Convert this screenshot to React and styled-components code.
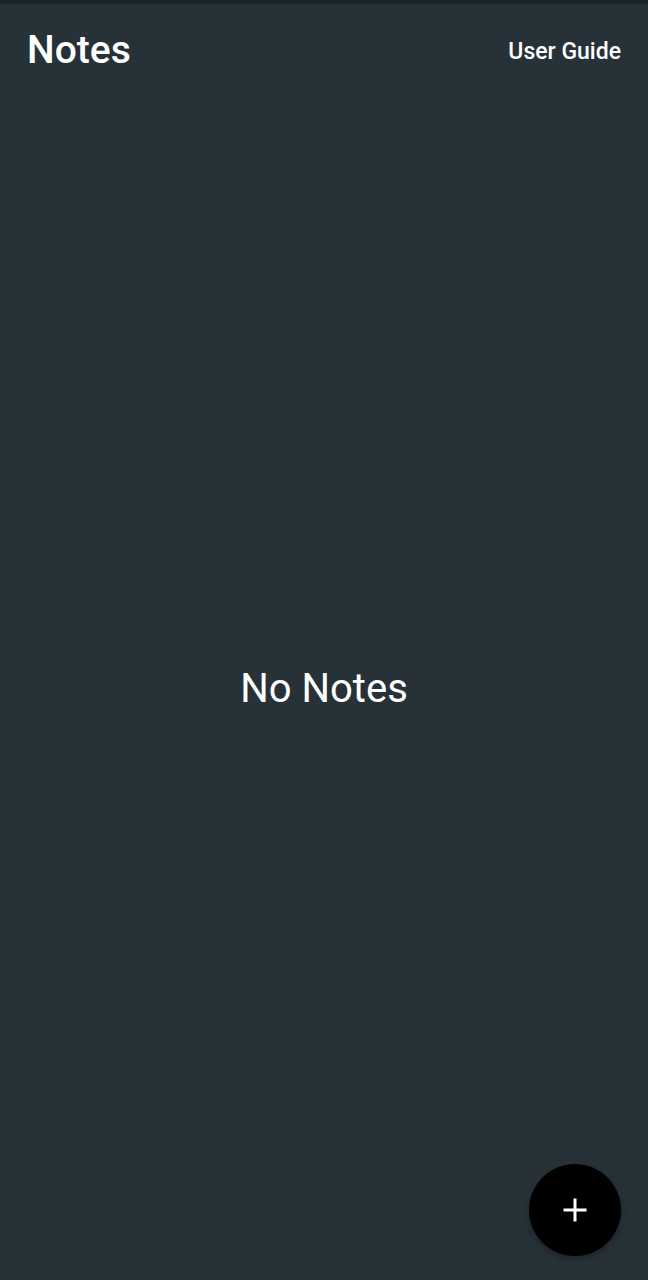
import React from "react";
import styled, { createGlobalStyle } from "styled-components";

const GlobalStyle = createGlobalStyle`
    html, body {
        margin: 0;
        padding: 0;
        background-color: #263238;
    }
    body {
        font-family: Roboto, "Liberation Sans", sans-serif;
    }
`

const Screen = styled.div`
    width: 648px;
    height: 1280px;
    display: flex;
    flex-direction: column;
    background-color: #263238;
    border-top: 4px solid #1c2429;
    box-sizing: border-box;
    position: relative;
    overflow: hidden;
`

const AppBar = styled.div`
    height: 92px;
    display: flex;
    align-items: center;
    justify-content: space-between;
    padding: 0 27px 0 27px;
    color: #ffffff;
`

const Title = styled.h1`
    margin: 0;
    font-size: 39px;
    font-weight: 500;
    letter-spacing: 0;
`

const LinkButton = styled.button`
    background: none;
    border: none;
    padding: 0;
    margin-top: 2px;
    color: #ffffff;
    font-family: inherit;
    font-size: 23px;
    font-weight: 500;
    cursor: pointer;
`

const Content = styled.div`
    flex: 1;
    display: flex;
    align-items: center;
    justify-content: center;
`

const Empty = styled.span`
    color: #ffffff;
    font-size: 40px;
    font-weight: 400;
`

const Fab = styled.button`
    position: absolute;
    right: 27px;
    bottom: 24px;
    width: 92px;
    height: 92px;
    border-radius: 50%;
    border: none;
    background-color: #000000;
    display: flex;
    align-items: center;
    justify-content: center;
    box-shadow: 0 3px 6px rgba(0, 0, 0, 0.3);
    cursor: pointer;
`

const App = () => {
    return (
        <>
            <GlobalStyle />
            <Screen>
                <AppBar>
                    <Title>Notes</Title>
                    <LinkButton>User Guide</LinkButton>
                </AppBar>
                <Content>
                    <Empty>No Notes</Empty>
                </Content>
                <Fab aria-label="add note">
                    <svg width="26" height="26" viewBox="0 0 26 26">
                        <path d="M13 1.5v23M1.5 13h23" stroke="#ffffff" strokeWidth="3" fill="none" />
                    </svg>
                </Fab>
            </Screen>
        </>
    )
}

export default App
